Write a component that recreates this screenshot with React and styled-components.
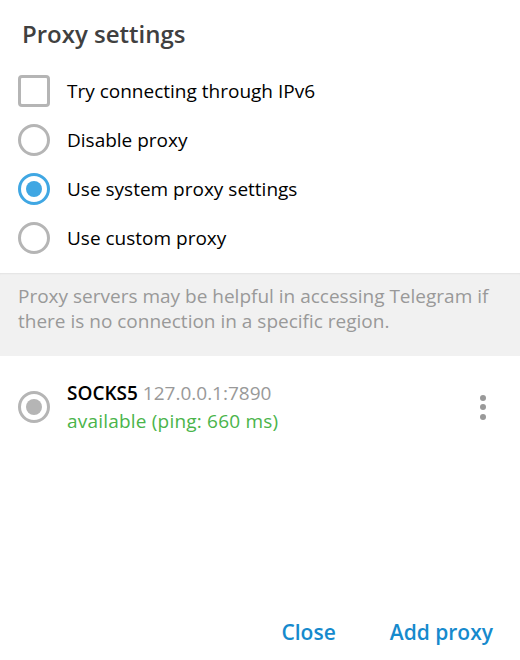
import React from "react";
import styled, { createGlobalStyle } from "styled-components";

const GlobalStyle = createGlobalStyle`
  html, body {
    margin: 0;
    padding: 0;
    background: #ffffff;
  }
  body {
    font-family: "Open Sans", "Liberation Sans", sans-serif;
  }
`;

const options = [
  { label: "Disable proxy", checked: false },
  { label: "Use system proxy settings", checked: true },
  { label: "Use custom proxy", checked: false },
];

function App() {
  return (
    <>
      <GlobalStyle />
      <Box>
        <Title>Proxy settings</Title>
        <OptionList>
          <OptionRow>
            <CheckBox />
            <OptionLabel>Try connecting through IPv6</OptionLabel>
          </OptionRow>
          {options.map((option) => (
            <OptionRow key={option.label}>
              <Radio $checked={option.checked} />
              <OptionLabel>{option.label}</OptionLabel>
            </OptionRow>
          ))}
        </OptionList>
        <About>
          Proxy servers may be helpful in accessing Telegram if there is no
          connection in a specific region.
        </About>
        <ProxyRow>
          <Radio $muted />
          <ProxyInfo>
            <ProxyTitle>
              <ProxyType>SOCKS5</ProxyType> <ProxyAddress>127.0.0.1:7890</ProxyAddress>
            </ProxyTitle>
            <ProxyStatus>available (ping: 660 ms)</ProxyStatus>
          </ProxyInfo>
          <MenuButton>
            <Dot />
            <Dot />
            <Dot />
          </MenuButton>
        </ProxyRow>
        <Footer>
          <TextButton>Close</TextButton>
          <TextButton>Add proxy</TextButton>
        </Footer>
      </Box>
    </>
  );
}

const Box = styled.div`
  display: flex;
  flex-direction: column;
  width: 520px;
  height: 660px;
  background: #ffffff;
`;

const Title = styled.div`
  padding: 18px 22px 0;
  font-size: 24px;
  font-weight: 600;
  line-height: 32px;
  color: #404040;
`;

const OptionList = styled.div`
  display: flex;
  flex-direction: column;
  padding: 16px 18px 0;
`;

const OptionRow = styled.div`
  display: flex;
  align-items: center;
  height: 49px;
`;

const CheckBox = styled.span`
  box-sizing: border-box;
  width: 32px;
  height: 32px;
  border: 3px solid #b5b5b5;
  border-radius: 4px;
  flex-shrink: 0;
`;

const Radio = styled.span`
  position: relative;
  box-sizing: border-box;
  width: 32px;
  height: 32px;
  border: 3px solid ${({ $checked }) => ($checked ? "#40a7e3" : "#b5b5b5")};
  border-radius: 50%;
  flex-shrink: 0;

  &::after {
    content: "";
    display: ${({ $checked, $muted }) => ($checked || $muted ? "block" : "none")};
    position: absolute;
    left: 50%;
    top: 50%;
    width: 16px;
    height: 16px;
    margin: -8px 0 0 -8px;
    border-radius: 50%;
    background: ${({ $checked }) => ($checked ? "#40a7e3" : "#b5b5b5")};
  }
`;

const OptionLabel = styled.span`
  margin-left: 17px;
  font-size: 19px;
  line-height: 26px;
  color: #000000;
`;

const About = styled.div`
  margin-top: 11px;
  padding: 11px 18px 22px;
  background: #f1f1f1;
  box-shadow: inset 0 2px 2px -1px rgba(0, 0, 0, 0.06);
  font-size: 19px;
  line-height: 25px;
  color: #999999;
`;

const ProxyRow = styled.div`
  display: flex;
  align-items: center;
  padding: 23px 18px 0;
`;

const ProxyInfo = styled.div`
  display: flex;
  flex-direction: column;
  flex: 1;
  margin-left: 17px;
`;

const ProxyTitle = styled.div`
  font-size: 19px;
  line-height: 28px;
`;

const ProxyType = styled.span`
  font-weight: 600;
  color: #000000;
`;

const ProxyAddress = styled.span`
  color: #999999;
`;

const ProxyStatus = styled.div`
  font-size: 19px;
  line-height: 28px;
  letter-spacing: 0.2px;
  color: #4ab44a;
`;

const MenuButton = styled.div`
  display: flex;
  flex-direction: column;
  gap: 3.5px;
  padding: 0 16px 0 0;
`;

const Dot = styled.span`
  width: 6px;
  height: 6px;
  border-radius: 50%;
  background: #999999;
`;

const Footer = styled.div`
  display: flex;
  justify-content: flex-end;
  gap: 54px;
  margin-top: auto;
  padding: 0 27px 13px 0;
`;

const TextButton = styled.span`
  font-size: 21px;
  font-weight: 600;
  line-height: 30px;
  color: #168acd;
`;

export default App;
